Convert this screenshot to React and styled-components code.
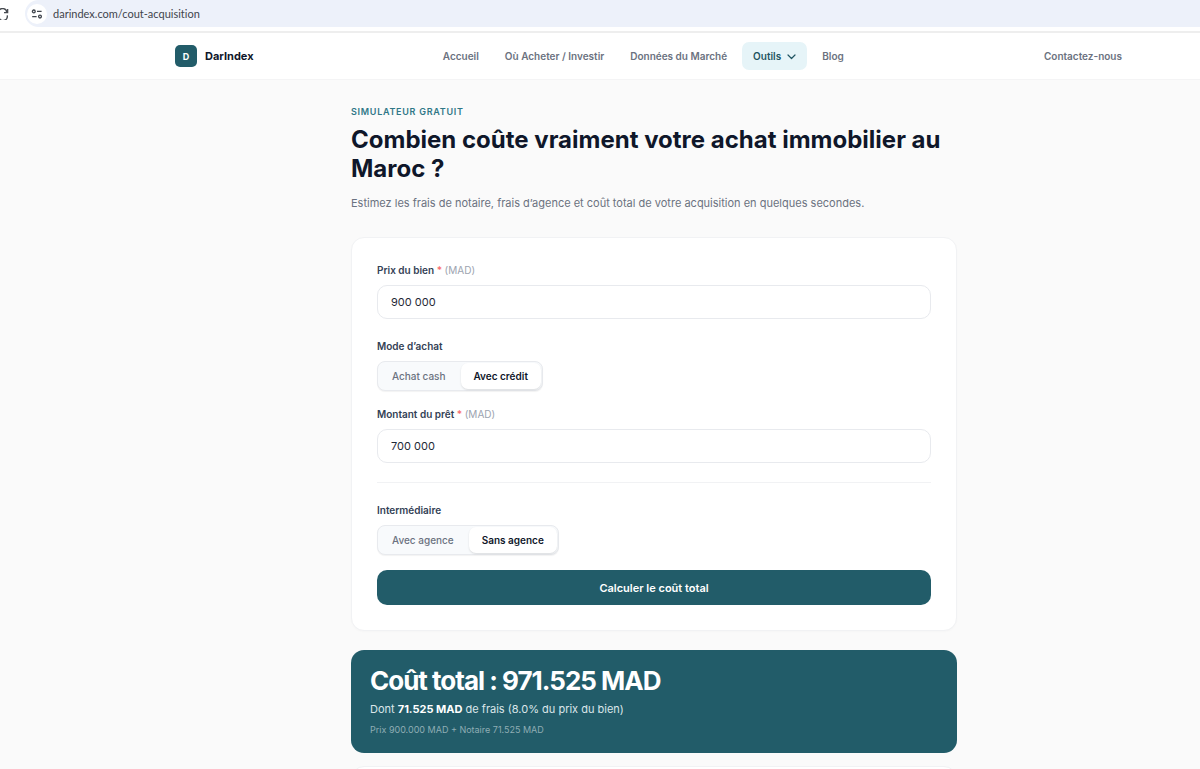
import React from 'react';
import styled, {createGlobalStyle, css} from 'styled-components';

const Colors = {
	brand: '#225c69',
	brandText: '#2f7787',
	ink: '#0f172a',
	body: '#334155',
	muted: '#6b7280',
	faint: '#9ca3af',
	line: '#e8eaee',
	page: '#fafafa',
};

const TextSmall = css`
	font-size: 10px;
	line-height: 16px;
`;

const TextBase = css`
	font-size: 11px;
	line-height: 17px;
`;

const GlobalStyle = createGlobalStyle`
	*, *::before, *::after {
		box-sizing: border-box;
	}

	body {
		margin: 0;
		background: ${Colors.page};
		color: ${Colors.ink};
		font-family: Inter, "Liberation Sans", sans-serif;
	}

	button, input {
		font-family: inherit;
	}
`;

const BrowserBar = styled.div`
	display: flex;
	align-items: flex-start;
	height: 33px;
	background: #fff;
	border-bottom: 2px solid #eeeeee;
	overflow: hidden;
`;

const ReloadButton = styled.button`
	width: 25px;
	height: 27px;
	padding: 0;
	border: 0;
	background: none;
	display: flex;
	align-items: center;
`;

const AddressBar = styled.div`
	flex: 1;
	display: flex;
	align-items: center;
	gap: 6px;
	height: 27px;
	padding-left: 2px;
	background: #edf1fa;
	border-radius: 14px 0 0 14px;
`;

const SiteInfo = styled.button`
	display: flex;
	align-items: center;
	justify-content: center;
	width: 20px;
	height: 20px;
	padding: 0;
	border: 0;
	border-radius: 50%;
	background: #fff;
`;

const AddressInput = styled.input`
	flex: 1;
	padding: 0;
	border: 0;
	background: none;
	outline: none;
	color: #3f444c;
	font-family: Lato, "Open Sans", sans-serif;
	font-size: 11px;
	line-height: 16px;
	font-variant-ligatures: none;
`;

const Header = styled.header`
	padding-left: 108px;
	background: #fff;
	border-bottom: 1px solid #f4f4f5;
`;

const HeaderInner = styled.div`
	display: flex;
	align-items: center;
	justify-content: space-between;
	max-width: 958px;
	height: 46px;
	margin: 0 auto;
`;

const Brand = styled.a`
	display: flex;
	align-items: center;
	gap: 8px;
	color: ${Colors.ink};
	font-size: 11px;
	font-weight: 700;
	text-decoration: none;
`;

const BrandMark = styled.span`
	display: flex;
	align-items: center;
	justify-content: center;
	width: 22px;
	height: 22px;
	border-radius: 5px;
	background: ${Colors.brand};
	color: #fff;
	font-size: 9px;
`;

const Nav = styled.nav`
	display: flex;
	align-items: center;
	gap: 4px;
`;

const NavLink = styled.a`
	${TextSmall};
	display: flex;
	align-items: center;
	gap: 6px;
	padding: 6px 11px;
	border-radius: 7px;
	background: ${({$active}) => ($active ? '#e6f4f8' : 'transparent')};
	color: ${({$active}) => ($active ? '#1f5461' : Colors.muted)};
	font-weight: 600;
	text-decoration: none;
`;

const Main = styled.main`
	padding: 24px 0 40px 108px;
`;

const Column = styled.div`
	max-width: 606px;
	margin: 0 auto;
`;

const Eyebrow = styled.p`
	margin: 0 0 5px;
	color: ${Colors.brandText};
	font-size: 9px;
	line-height: 16px;
	font-weight: 600;
	letter-spacing: 0.08em;
	text-transform: uppercase;
`;

const Title = styled.h1`
	margin: 0;
	font-size: 24px;
	line-height: 29px;
	font-weight: 700;
`;

const Lead = styled.p`
	${TextBase};
	margin: 12px 0 25px;
	color: ${Colors.muted};
`;

const Card = styled.section`
	padding: 24px 25px 25px;
	border: 1px solid #f1f2f4;
	border-radius: 13px;
	background: #fff;
	box-shadow: 0 1px 2px rgba(0, 0, 0, 0.02);
`;

const Form = styled.form`
	display: flex;
	flex-direction: column;
`;

const Field = styled.div`
	margin-bottom: 19px;
`;

const labelStyle = css`
	${TextSmall};
	display: block;
	padding: 0;
	margin-bottom: 7px;
	color: ${Colors.body};
	font-weight: 600;
`;

const Label = styled.label`
	${labelStyle};
`;

const Required = styled.span`
	color: #f87171;
`;

const Unit = styled.span`
	color: ${Colors.faint};
	font-weight: 400;
`;

const Input = styled.input`
	display: block;
	width: 100%;
	height: 34px;
	padding: 0 13px;
	border: 1px solid ${Colors.line};
	border-radius: 10px;
	background: #fff;
	color: #1f2937;
	outline: none;
	font-size: 11px;
`;

const Choice = styled.fieldset`
	min-width: 0;
	margin: 0 0 15px;
	padding: 0;
	border: 0;
`;

const Legend = styled.legend`
	${labelStyle};
`;

const Segments = styled.div`
	display: inline-flex;
	gap: 2px;
	vertical-align: top;
	padding: 1px;
	border: 1px solid ${Colors.line};
	border-radius: 8px;
	background: #f8fafc;
	box-shadow: 0 1px 1px rgba(0, 0, 0, 0.05);
`;

const Segment = styled.label`
	${TextSmall};
	padding: 5px 13px;
	border-radius: 7px;
	color: ${Colors.muted};
	font-weight: 500;
	cursor: pointer;

	&:has(input:checked) {
		background: #fff;
		color: ${Colors.ink};
		font-weight: 600;
		box-shadow: 0 1px 2px rgba(0, 0, 0, 0.12);
	}
`;

const Radio = styled.input`
	position: absolute;
	opacity: 0;
	pointer-events: none;
`;

const Divider = styled.hr`
	width: 100%;
	height: 1px;
	margin: 0 0 19px;
	border: 0;
	background: #f1f2f4;
`;

const SubmitButton = styled.button`
	height: 35px;
	border: 0;
	border-radius: 10px;
	background: ${Colors.brand};
	color: #fff;
	font-size: 11px;
	font-weight: 600;
	cursor: pointer;
`;

const Result = styled.section`
	margin: 19px 0 13px;
	padding: 14px 19px 15px;
	border-radius: 13px;
	background: ${Colors.brand};
	color: #fff;
`;

const Total = styled.h2`
	margin: 0 0 4px;
	font-size: 26px;
	line-height: 33px;
	font-weight: 700;
	letter-spacing: -1px;
`;

const Fees = styled.p`
	${TextBase};
	margin: 0 0 4px;
	color: #dbe6e9;

	strong {
		color: #fff;
		font-weight: 700;
	}
`;

const Breakdown = styled.p`
	margin: 0;
	color: #8fadb4;
	font-size: 9px;
	line-height: 16px;
`;

const NAV_LINKS = [
	{label: 'Accueil'},
	{label: 'Où Acheter / Investir'},
	{label: 'Données du Marché'},
	{label: 'Outils', active: true},
	{label: 'Blog'},
];

function ReloadIcon() {
	return (
		<svg width="10" height="12" viewBox="0 0 10 12" fill="none" stroke="#474b50" strokeWidth="1.4">
			<path d="M-1 9.4A4.2 4.2 0 0 0 7.2 7.4M6.8 4.2A4.2 4.2 0 0 0-1 2.6M7.6 1v3.6H4" />
		</svg>
	);
}

function TuneIcon() {
	return (
		<svg width="12" height="12" viewBox="0 0 12 12" fill="none" stroke="#3f444c" strokeWidth="1.3">
			<circle cx="2.8" cy="3.4" r="1.4" />
			<path d="M6 3.4h4.6M1.2 8.6h4.4" />
			<circle cx="9" cy="8.6" r="1.4" />
		</svg>
	);
}

function ChevronIcon() {
	return (
		<svg width="9" height="9" viewBox="0 0 9 9" fill="none" stroke="currentColor" strokeWidth="1.2" strokeLinecap="round" strokeLinejoin="round">
			<path d="M1 3l3.5 3.5L8 3" />
		</svg>
	);
}

function AmountField({id, label, value, onChange}) {
	return (
		<Field>
			<Label htmlFor={id}>
				{label} <Required>*</Required> <Unit>(MAD)</Unit>
			</Label>
			<Input
				id={id}
				inputMode="numeric"
				value={value}
				onChange={(e) => onChange(e.target.value)}
			/>
		</Field>
	);
}

function SegmentedChoice({name, legend, options, value, onChange}) {
	return (
		<Choice>
			<Legend>{legend}</Legend>
			<Segments>
				{options.map((option) =>
					<Segment key={option}>
						<Radio
							type="radio"
							name={name}
							value={option}
							checked={option === value}
							onChange={() => onChange(option)}
						/>
						{option}
					</Segment>
				)}
			</Segments>
		</Choice>
	);
}

class App extends React.Component {
	state = {
		price: '900 000',
		loan: '700 000',
		mode: 'Avec crédit',
		agency: 'Sans agence',
	};

	render() {
		const {price, loan, mode, agency} = this.state;

		return (
			<>
				<GlobalStyle />
				<BrowserBar>
					<ReloadButton aria-label="Recharger"><ReloadIcon /></ReloadButton>
					<AddressBar>
						<SiteInfo aria-label="Informations du site"><TuneIcon /></SiteInfo>
						<AddressInput
							aria-label="Adresse"
							defaultValue="darindex.com/cout-acquisition"
						/>
					</AddressBar>
				</BrowserBar>
				<Header>
					<HeaderInner>
						<Brand href="#"><BrandMark>D</BrandMark>DarIndex</Brand>
						<Nav>
							{NAV_LINKS.map(({label, active}) =>
								<NavLink key={label} href="#" $active={active}>
									{label}
									{active && <ChevronIcon />}
								</NavLink>
							)}
						</Nav>
						<NavLink href="#">Contactez-nous</NavLink>
					</HeaderInner>
				</Header>
				<Main>
					<Column>
						<Eyebrow>Simulateur gratuit</Eyebrow>
						<Title>Combien coûte vraiment votre achat immobilier au Maroc ?</Title>
						<Lead>
							Estimez les frais de notaire, frais d’agence et coût total de votre
							acquisition en quelques secondes.
						</Lead>
						<Card>
							<Form onSubmit={(e) => e.preventDefault()}>
								<AmountField
									id="price"
									label="Prix du bien"
									value={price}
									onChange={(value) => this.setState({price: value})}
								/>
								<SegmentedChoice
									name="mode"
									legend="Mode d’achat"
									options={['Achat cash', 'Avec crédit']}
									value={mode}
									onChange={(value) => this.setState({mode: value})}
								/>
								<AmountField
									id="loan"
									label="Montant du prêt"
									value={loan}
									onChange={(value) => this.setState({loan: value})}
								/>
								<Divider />
								<SegmentedChoice
									name="agency"
									legend="Intermédiaire"
									options={['Avec agence', 'Sans agence']}
									value={agency}
									onChange={(value) => this.setState({agency: value})}
								/>
								<SubmitButton type="submit">Calculer le coût total</SubmitButton>
							</Form>
						</Card>
						<Result>
							<Total>Coût total : 971.525 MAD</Total>
							<Fees>Dont <strong>71.525 MAD</strong> de frais (8.0% du prix du bien)</Fees>
							<Breakdown>Prix 900.000 MAD + Notaire 71.525 MAD</Breakdown>
						</Result>
						<Card />
					</Column>
				</Main>
			</>
		);
	}
}

export default App;
